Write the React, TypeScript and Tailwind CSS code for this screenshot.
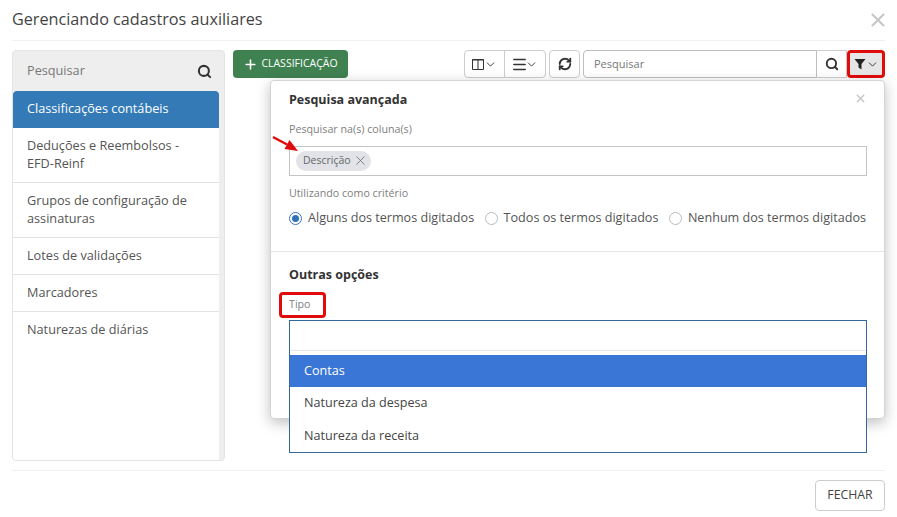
import React from 'react';
import { Plus, Search, X, ChevronDown, RefreshCw, Menu } from 'lucide-react';

const menuItems = [
  { label: 'Classificações contábeis', active: true },
  { label: 'Deduções e Reembolsos - EFD-Reinf' },
  { label: 'Grupos de configuração de assinaturas' },
  { label: 'Lotes de validações' },
  { label: 'Marcadores' },
  { label: 'Naturezas de diárias' },
];

const Radio = ({ label, checked }: { label: string; checked?: boolean }) => (
  <label className="flex items-center gap-[6px]">
    {checked ? (
      <span className="flex h-[13px] w-[13px] items-center justify-center rounded-full border border-[#3a76c4]">
        <span className="h-[7px] w-[7px] rounded-full bg-[#3273b5]" />
      </span>
    ) : (
      <span className="h-[13px] w-[13px] rounded-full border border-[#bbbbbb]" />
    )}
    <span>{label}</span>
  </label>
);

const Sidebar = () => (
  <div className="flex h-[411px] w-[213px] shrink-0 flex-col overflow-hidden rounded border border-[#e4e4e4] bg-[#eeeeee]">
    <div className="flex h-[40px] shrink-0 items-center justify-between pl-[14px] pr-[12px] text-[12.7px] text-[#777777]">
      <span>Pesquisar</span>
      <Search className="h-[15px] w-[15px] text-[#333333]" strokeWidth={3.25} />
    </div>
    <div className="mr-[5px] flex-1 bg-white">
      {menuItems.map((item) =>
        item.active ? (
          <div key={item.label} className="rounded-t-sm bg-[#337ab7] px-[14px] pb-[11px] pt-[8px] text-[12.7px] leading-[18px] text-white">
            {item.label}
          </div>
        ) : (
          <div key={item.label} className="border-b border-[#e2e2e2] px-[14px] pb-[10px] pt-[8px] text-[12.7px] leading-[18px] text-[#555555] last:border-b-0">
            {item.label}
          </div>
        ),
      )}
    </div>
  </div>
);

const Toolbar = () => (
  <div className="flex h-[28px] items-stretch justify-between">
    <button className="flex w-[115px] items-center justify-center gap-[3px] rounded-sm bg-[#3f8150] text-[10.5px] text-white">
      <Plus className="h-[15px] w-[15px]" strokeWidth={2.5} />
      CLASSIFICAÇÃO
    </button>
    <div className="flex items-stretch text-[#333333]">
      <div className="flex rounded-sm border border-[#cccccc]">
        <span className="flex w-[40px] items-center justify-center border-r border-[#cccccc]">
          <svg viewBox="0 0 12 11" className="h-[11px] w-[12px]" fill="none" stroke="#333333">
            <path d="M0.5 0.5h11v10h-11zM6 0.5v10" />
            <path d="M0.5 1h11" />
          </svg>
          <ChevronDown className="h-[13px] w-[13px]" strokeWidth={1.75} />
        </span>
        <span className="flex w-[40px] items-center justify-center">
          <Menu className="-ml-[1px] h-[17px] w-[17px]" strokeWidth={2.25} />
          <ChevronDown className="-ml-[3px] h-[13px] w-[13px]" strokeWidth={1.75} />
        </span>
      </div>
      <span className="ml-[3px] flex w-[31px] items-center justify-center rounded-sm border border-[#cccccc]">
        <RefreshCw className="h-[14px] w-[14px]" strokeWidth={3.25} />
      </span>
      <div className="ml-[3px] flex w-[234px] items-center rounded-l-sm border border-[#bfbfbf] pl-[10px] pt-[1px] text-[11px] text-[#777777]">
        Pesquisar
      </div>
      <span className="flex w-[30px] items-center justify-center border-y border-r border-[#cccccc]">
        <Search className="h-[14px] w-[14px]" strokeWidth={3.25} />
      </span>
      <span className="flex w-[38px] items-center justify-center rounded-sm border-[3px] border-[#e00b0b] bg-[#e6e6e6]">
        <svg viewBox="0 0 12 12" className="h-[12px] w-[12px]" fill="#222222">
          <path d="M0.5 1h11L7.5 6v5.5L4.5 9.5V6z" />
        </svg>
        <ChevronDown className="h-[13px] w-[13px]" strokeWidth={1.75} />
      </span>
    </div>
  </div>
);

const FilterPopover = () => (
  <div className="absolute left-[270px] top-[80px] h-[339px] w-[615px] rounded border border-[#d4d4d4] bg-white shadow-[0_4px_14px_rgba(0,0,0,0.25)]">
    <X className="absolute right-[17px] top-[11px] h-[13px] w-[13px] text-[#c4c4c4]" strokeWidth={2.5} />
    <div className="h-[171px] border-b border-[#e5e5e5] px-[18px] pt-[10px]">
      <div className="text-[12.5px] font-bold leading-[17px] text-[#333333]">Pesquisa avançada</div>
      <div className="mt-[14px] text-[10.7px] leading-[14px] text-[#808080]">Pesquisar na(s) coluna(s)</div>
      <div className="mt-[10px] flex h-[30px] w-[578px] items-center border border-[#c4c4c4] px-[6px]">
        <span className="flex h-[20px] items-center gap-[2px] rounded-full bg-[#e1e3e8] pl-[7px] pr-[3px] text-[10.5px] text-[#666666]">
          Descrição
          <X className="-mt-[2px] h-[15px] w-[15px]" strokeWidth={1.25} />
        </span>
      </div>
      <div className="mt-[10px] text-[10.7px] leading-[14px] text-[#808080]">Utilizando como critério</div>
      <div className="mt-[9px] flex justify-between text-[12.6px] leading-[18px] text-[#555555]">
        <Radio label="Alguns dos termos digitados" checked />
        <Radio label="Todos os termos digitados" />
        <Radio label="Nenhum dos termos digitados" />
      </div>
    </div>
    <div className="px-[18px] pt-[14px]">
      <div className="text-[12.5px] font-bold leading-[17px] text-[#333333]">Outras opções</div>
      <div className="mt-[14px] text-[10.7px] leading-[14px] text-[#808080]">Tipo</div>
    </div>
    <div className="absolute left-[18px] top-[239px] w-[578px] border border-[#32689e] bg-white text-[12.6px] text-[#444444]">
      <div className="h-[30px] border-b border-[#e6e6e6]" />
      <div className="mt-[4px] bg-[#3a76d6] px-[14px] py-[7px] leading-[18px] text-white">Contas</div>
      <div className="px-[14px] py-[7px] leading-[18px]">Natureza da despesa</div>
      <div className="px-[14px] pb-[7px] pt-[8px] leading-[18px]">Natureza da receita</div>
    </div>
  </div>
);

export default function App() {
  return (
    <div className="relative h-[517px] w-[897px] overflow-hidden bg-white px-[12px] font-['Open_Sans',sans-serif]">
      <div className="flex h-[41px] items-start justify-between border-b border-[#f0f0f0] pt-[8px]">
        <h1 className="text-[16.2px] leading-[22px] text-[#444444]">Gerenciando cadastros auxiliares</h1>
        <X className="-mr-[4px] mt-[1px] h-[22px] w-[22px] text-[#c8c8c8]" strokeWidth={2.5} />
      </div>

      <div className="mt-[9px] flex gap-[8px]">
        <Sidebar />
        <div className="flex-1">
          <Toolbar />
        </div>
      </div>

      <div className="mt-[9px] flex h-[47px] items-start justify-end border-t border-[#f0f0f0] pt-[9px]">
        <button className="h-[31px] w-[70px] rounded-sm border border-[#cccccc] text-[12.3px] text-[#444444]">FECHAR</button>
      </div>

      <FilterPopover />

      {/* marcacoes vermelhas do print */}
      <div className="absolute left-[279px] top-[292px] h-[26px] w-[47px] rounded-sm border-[3px] border-[#e00b0b]" />
      <svg className="absolute left-[271px] top-[135px] h-[18px] w-[28px]" viewBox="0 0 28 18">
        <path d="M2 2L16 9.5" stroke="#e00b0b" strokeWidth="2.5" />
        <path d="M27 16L13.5 14L18.5 5z" fill="#e00b0b" />
      </svg>
    </div>
  );
}
